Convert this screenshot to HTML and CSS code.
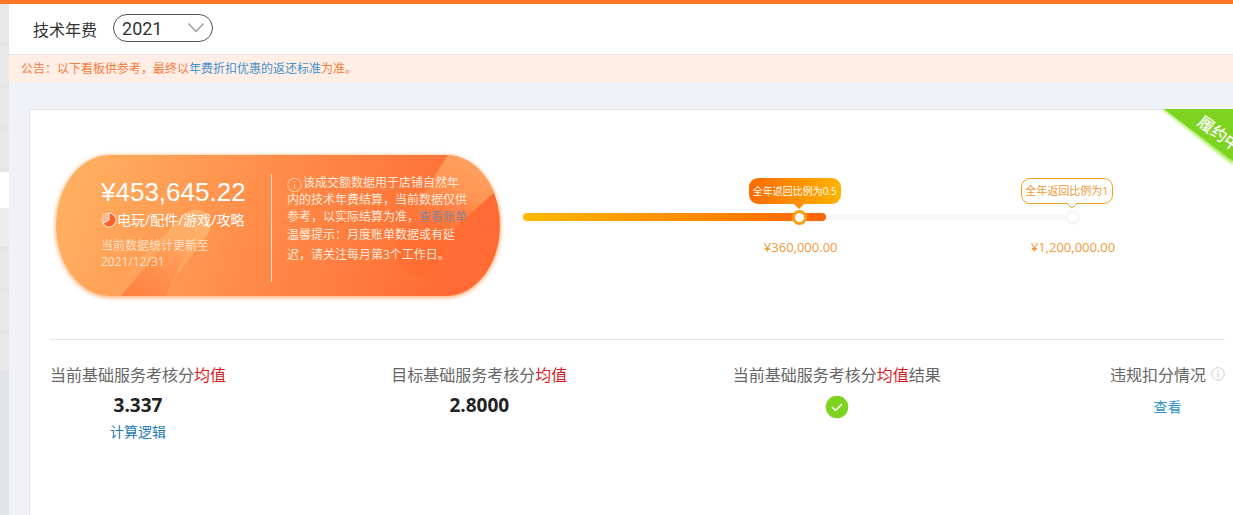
FILE: index.html
```html
<!DOCTYPE html>
<html lang="zh-CN">
<head>
<meta charset="utf-8">
<title>技术年费</title>
<link rel="stylesheet" href="styles.css">
</head>
<body>
<div class="app">
  <aside class="rail">
    <span class="rail-block"></span>
    <span class="rail-block"></span>
    <span class="rail-block"></span>
    <span class="rail-block"></span>
    <span class="rail-current"></span>
    <span class="rail-block rail-light"></span>
    <span class="rail-block"></span>
    <span class="rail-block"></span>
    <span class="rail-block rail-last"></span>
  </aside>
  <main class="main">
    <header class="header">
      <label class="title" for="year">技术年费</label>
      <span class="year">
        <select id="year" class="year-select"><option>2021</option></select>
        <svg class="year-arrow" viewBox="0 0 18 12" width="18" height="12"><path d="M1.500 1.500 9 9.500l7.500-8" fill="none" stroke="#999" stroke-width="1.300"/></svg>
      </span>
    </header>
    <p class="notice">公告：以下看板供参考，最终以<a href="#" class="link">年费折扣优惠的返还标准</a>为准。</p>
    <section class="card">
      <div class="ribbon">
        <svg class="ribbon-shape" viewBox="0 0 80 60" width="80" height="60">
          <defs><filter id="soft" x="-20%" y="-20%" width="140%" height="140%"><feGaussianBlur stdDeviation="1.500"/></filter></defs>
          <path d="M9 0 80 56V0z" fill="#a4ee55" filter="url(#soft)"/>
          <path d="M11 0 80 52V0z" fill="#7ed321"/>
        </svg>
        <span class="ribbon-text">履约中</span>
      </div>
      <div class="overview">
        <div class="pill">
          <svg class="pill-art" viewBox="0 0 444 141" preserveAspectRatio="none">
            <defs>
              <linearGradient id="beam" x1="1" y1="0" x2="0" y2="1"><stop offset="0" stop-color="#ffbd7c" stop-opacity=".8"/><stop offset="1" stop-color="#ffa45a" stop-opacity=".3"/></linearGradient>
              <linearGradient id="shine" x1=".8" y1="0" x2=".2" y2="1"><stop offset="0" stop-color="#ffa564"/><stop offset=".4" stop-color="#ff9453"/><stop offset="1" stop-color="#ff7a3d" stop-opacity="0"/></linearGradient>
              <linearGradient id="dark" x1="1" y1="0" x2="0" y2="1"><stop offset="0" stop-color="#ff7436" stop-opacity="0"/><stop offset="1" stop-color="#ff7436" stop-opacity=".75"/></linearGradient>
            </defs>
            <path d="M50 141 126 61q14-13 25-1 8 12-2 23L105 141z" fill="url(#beam)"/>
            <path d="M65 141 107 91q14-13 29 0-14 22-27 50z" fill="url(#dark)"/>
            <path d="M340 82q10-8 24-16l26-10q12 12 4 30-10 28-30 34-22 0-24-24z" fill="#ff6229" opacity=".3"/>
            <path d="M392 0h32l18 34-56 50q-20 10-30-6-6-14 4-28z" fill="url(#shine)"/>
          </svg>
          <div class="amount-box">
            <strong class="amount">¥453,645.22</strong>
            <span class="category">
              <svg viewBox="0 0 16 16" width="16" height="16"><circle cx="8" cy="8" r="7" fill="#ff5f2b" stroke="#ffe1cb" stroke-width="1.200"/><path d="M8 8V1A7 7 0 0 0 2 11.500z" fill="#ffb98c"/><path d="M8 1v7l-6 3.500" fill="none" stroke="#fff" stroke-width="1"/></svg>
              电玩/配件/游戏/攻略
            </span>
            <span class="updated">当前数据统计更新至<br>2021/12/31</span>
          </div>
          <div class="explain">
            <p class="explain-main"><svg class="explain-icon" viewBox="0 0 16 16" width="16" height="16"><circle cx="7.500" cy="8" r="6.700" fill="none" stroke="#ffd0b0"/><path d="M7.500 7v5M7.500 4v1.500" stroke="#ffd0b0"/></svg>该成交额数据用于店铺自然年内的技术年费结算，当前数据仅供参考，以实际结算为准，<a href="#" class="bill-link">查看账单</a></p>
            <p class="explain-tip">温馨提示：月度账单数据或有延迟，请关注每月第3个工作日。</p>
          </div>
        </div>
        <div class="track">
          <div class="track-fill"></div>
          <div class="stop stop-half">
            <span class="bubble bubble-on">全年返回比例为0.5<svg class="tail" viewBox="0 0 10 6" width="10" height="6"><path d="M0 0h10L5 5z" fill="#ff8a00"/></svg></span>
            <span class="dot dot-on"></span>
            <span class="price">¥360,000.00</span>
          </div>
          <div class="stop stop-full">
            <span class="bubble">全年返回比例为1<svg class="tail" viewBox="0 0 10 6" width="10" height="6"><path d="M0 0h10L5 5z" fill="#fff"/><path d="M0 .5 5 5l5-4.500" fill="none" stroke="#f0a020"/></svg></span>
            <span class="dot"></span>
            <span class="price">¥1,200,000.00</span>
          </div>
        </div>
      </div>
      <div class="metrics">
        <div class="metric">
          <h2 class="metric-name">当前基础服务考核分<em class="red">均值</em></h2>
          <strong class="metric-value">3.337</strong>
          <a href="#" class="metric-link deep">计算逻辑</a>
        </div>
        <div class="metric">
          <h2 class="metric-name">目标基础服务考核分<em class="red">均值</em></h2>
          <strong class="metric-value">2.8000</strong>
        </div>
        <div class="metric">
          <h2 class="metric-name">当前基础服务考核分<em class="red">均值</em>结果</h2>
          <svg class="check" viewBox="0 0 24 24" width="24" height="24"><circle cx="12" cy="12" r="11.300" fill="#7ed321"/><path d="m7 12 3.500 3.500L17 9" fill="none" stroke="#fff" stroke-width="1.500"/></svg>
        </div>
        <div class="metric metric-last">
          <h2 class="metric-name">违规扣分情况<svg class="hint" viewBox="0 0 14 14" width="14" height="14"><circle cx="7" cy="7" r="6.300" fill="none" stroke="#ccc"/><path d="M7 6v4.500M7 3.500V5" stroke="#ccc" stroke-width="1.200"/></svg></h2>
          <a href="#" class="metric-link">查看</a>
        </div>
      </div>
    </section>
  </main>
</div>
</body>
</html>
```
FILE: styles.css
```css
* { box-sizing: border-box; }
body {
  margin: 0;
  font-family: "Open Sans", "Noto Sans CJK SC", sans-serif;
  font-weight: 400;
  font-size: 12px;
  color: #333;
  background: #f0f2f7;
}
p, h2 { margin: 0; font-weight: inherit; }
a { text-decoration: none; }
.app {
  display: flex;
  min-height: 100vh;
  border-top: 4px solid #ff7427;
  overflow: hidden;
}
.rail {
  flex: 0 0 9px;
  display: flex;
  flex-direction: column;
  background: #e3e4e6;
}
.rail-block { height: 42px; background: #e8e8e8; border-bottom: 4px solid #e4e5e6; }
.rail-current { height: 36px; background: #fff; }
.rail-light { background: #ededed; }
.rail-last { border-bottom: 0; height: 36px; }
.main { flex: 1; min-width: 0; display: flex; flex-direction: column; }
.header {
  display: flex;
  align-items: center;
  gap: 16px;
  height: 51px;
  padding: 0 24px 2px;
  background: #fff;
  border-bottom: 1px solid #e8e4e4;
}
.title { font-size: 16px; line-height: 20px; color: #333; padding-top: 4px; }
.year { position: relative; display: flex; }
.year-select {
  appearance: none;
  width: 100px;
  height: 28px;
  padding: 0 8px;
  border: 1px solid #555;
  border-radius: 14px;
  background: #fff;
  color: #333;
  font: 400 18px Roboto, sans-serif;
}
.year-arrow { position: absolute; right: 8px; top: 8px; pointer-events: none; }
.notice {
  padding: 0 12px;
  line-height: 27px;
  color: #f47c3c;
  background: #ffeee5;
}
.link { color: #3f90cb; }
.card {
  position: relative;
  flex: 1;
  margin: 27px 0 0 20px;
  padding: 45px 8px 40px 20px;
  background: #fff;
  border: solid #e4e6ea;
  border-width: 1px 0 0 1px;
}
.ribbon {
  position: absolute;
  top: -1px;
  right: 0;
  width: 80px;
  height: 60px;
  overflow: hidden;
}
.ribbon-shape { display: block; }
.ribbon-text {
  position: absolute;
  left: 41px;
  top: 18px;
  width: 60px;
  font-size: 16px;
  font-weight: 500;
  line-height: 20px;
  color: #fff;
  transform: rotate(36deg);
}
.overview {
  display: flex;
  align-items: center;
  padding: 0 153px 43px 6px;
  border-bottom: 1px solid #e6e6e6;
}
.pill {
  position: relative;
  flex: 0 0 444px;
  display: flex;
  height: 141px;
  padding: 19px 30px 14px 45px;
  border-radius: 54px / 70px;
  background: linear-gradient(110deg, #ffaf60 5%, #ff8d49 45%, #ff6b32 90%);
  box-shadow: 0 1px 5px #ff9a55;
  overflow: hidden;
  color: #fff;
}
.pill-art { position: absolute; inset: 0; width: 100%; height: 100%; }
.amount-box {
  position: relative;
  display: flex;
  flex-direction: column;
  width: 171px;
  border-right: 1px solid #ffe0cc;
}
.amount { font: 400 26px/36px "Liberation Sans", sans-serif; }
.category { display: flex; align-items: center; font-size: 14px; line-height: 20px; white-space: nowrap; }
.updated { margin-top: 8px; line-height: 16px; color: #ffe0c8; }
.explain {
  position: relative;
  width: 197px;
  padding-left: 15px;
  color: #ffe9db;
}
.explain-main { line-height: 17px; }
.explain-icon { vertical-align: -4px; margin: -2px 0; }
.explain-tip { line-height: 20px; }
.bill-link { color: #8c8393; }
.track {
  position: relative;
  flex: 1;
  height: 8px;
  margin: 0 0 17px 23px;
  background: linear-gradient(#f9f8f6, #f9f8f6) 0 50% / 100% 5px no-repeat;
}
.track-fill {
  width: 55.2%;
  height: 8px;
  border-radius: 4px;
  background: linear-gradient(90deg, #ffb900, #ff6400);
}
.stop {
  position: absolute;
  top: -35px;
  display: flex;
  flex-direction: column;
  align-items: center;
  width: 120px;
  margin-left: -60px;
}
.stop-half { left: 50.4%; }
.stop-full { left: 100%; }
.bubble {
  position: relative;
  width: 92px;
  height: 26px;
  margin-right: 10px;
  border: 1px solid #f0a020;
  border-radius: 9px;
  background: #fff;
  color: #ee9836;
  font-size: 11px;
  line-height: 24px;
  text-align: center;
  white-space: nowrap;
}
.bubble-on {
  border: 0;
  font-size: 10px;
  line-height: 26px;
  color: #fff;
  background: linear-gradient(90deg, #ff6a00, #ffb400);
}
.tail { position: absolute; left: 45px; top: 100%; }
.dot {
  width: 15px;
  height: 15px;
  margin-top: 6px;
  border: 3px solid #f7f6f4;
  border-radius: 50%;
  background: #fff;
}
.dot-on { border-color: #f5a011; }
.price { margin: 12px 0 0 2px; font-size: 13px; line-height: 20px; color: #f09a3a; }
.metrics { display: flex; justify-content: space-between; padding-top: 23px; }
.metric { display: flex; flex-direction: column; align-items: center; }
.metric-last { margin-left: 4px; }
.metric-name { display: flex; align-items: center; font-size: 16px; line-height: 24px; color: #666; }
.red { font-style: normal; color: #dc1a1e; }
.metric-value { font-size: 19px; line-height: 36px; font-weight: 700; color: #222; }
.metric-link { margin-top: 9px; font-size: 14px; line-height: 22px; color: #2f92ca; }
.deep { margin-top: -2px; color: #2478b4; }
.check { margin-top: 8px; }
.hint { margin: 0 0 3px 5px; }
```
